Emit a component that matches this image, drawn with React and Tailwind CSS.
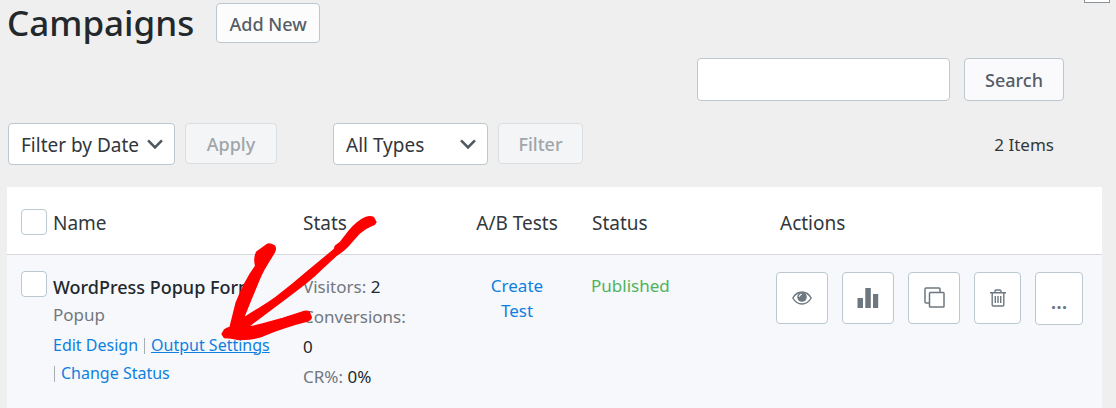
import clsx from "clsx";

const CAMPAIGNS = [
  {
    id: 1,
    name: "WordPress Popup Form",
    type: "Popup",
    visitors: 2,
    conversions: 0,
    rate: "0%",
    status: "Published",
  },
];

const EyeIcon = () => (
  <svg width="20" height="14" viewBox="0 0 20 14" fill="none">
    <path d="M0.8 7C3 3.2 6.2 1 10 1s7 2.200 9.200 6C17 10.800 13.800 13 10 13S3 10.800 0.800 7Z" stroke="currentColor" strokeWidth="1.400" />
    <circle cx="10" cy="6" r="4.800" fill="currentColor" />
    <path d="M7.300 5.800C7.400 4.300 8.300 3.400 9.800 3.200" stroke="#fff" strokeWidth="1.100" />
  </svg>
);

const ChartIcon = () => (
  <svg width="22" height="20" viewBox="0 0 22 20" fill="currentColor">
    <path d="M0.500 10h5.500v10H0.500zM8.300 0h5.500v20H8.300zM16 6h5.200v14H16z" />
  </svg>
);

const CopyIcon = () => (
  <svg width="21" height="21" viewBox="0 0 21 21" fill="none" stroke="currentColor" strokeWidth="1.500">
    <path d="M5 16H2a1 1 0 0 1-1-1V2a1 1 0 0 1 1-1h13a1 1 0 0 1 1 1v3" />
    <rect x="5.500" y="5.500" width="14.500" height="14.500" rx="0.800" />
  </svg>
);

const TrashIcon = () => (
  <svg width="16" height="18" viewBox="0 0 16 18" fill="none" stroke="currentColor" strokeWidth="1.400">
    <path d="M0 3.700h16M5 3.500V2.200Q5 1 6.200 1h3.600Q11 1 11 2.200v1.300M2.200 4v12q0 1 1 1h9.600q1 0 1-1V4M5.300 7v7M8 7v7M10.700 7v7" />
  </svg>
);

const Chevron = () => (
  <svg className="pointer-events-none absolute right-3 top-4" width="16" height="11" viewBox="0 0 15 10" fill="none">
    <path d="M1 1.200l6.500 6.500L14 1.200" stroke="#50575e" strokeWidth="2.400" />
  </svg>
);

const Arrow = () => (
  <svg
    className="pointer-events-none absolute left-[209px] top-[23px]"
    width="170"
    height="136"
    viewBox="0 0 510 408"
    fill="#ff0000"
    stroke="#ff0000"
    strokeWidth="4"
    strokeLinejoin="round"
  >
    <path d="M18 372L25 360Q32 354 42 352L60 280Q85 215 119 168Q113 145 122 126L152 104Q160 98 176 108Q181 117 174 129L156 158L144 178Q130 205 125 220L105 268L82 325Q108 307 130 295Q155 280 180 262L230 222L280 180L355 118L358 108L372 98L400 62Q425 33 448 23Q462 18 472 22L480 36Q478 43 468 46Q445 55 430 70L405 98Q390 118 360 137L320 174Q295 199 270 219L210 265L150 310L95 351Q120 348 140 342L200 325L265 304Q275 302 280 307L286 322Q284 330 274 333L240 342Q210 351 180 362L140 378Q120 385 100 387L70 389L45 384L25 383Z" />
  </svg>
);

const SelectBox = ({ label, value, className }) => (
  <div className={clsx("relative", className)}>
    <select
      aria-label={label}
      className="h-[42px] w-full appearance-none rounded-[4px] border border-[#bcc8d0] bg-white pl-3 pt-[2px] text-[19px] text-[#32373c]"
    >
      <option>{value}</option>
    </select>
    <Chevron />
  </div>
);

const BUTTON = "rounded-[4px] border pt-[2px] font-medium text-[18px]";

const ACTIONS = [
  { label: "Preview", icon: EyeIcon, className: "w-[52px]" },
  { label: "Analytics", icon: ChartIcon, className: "w-[52px]" },
  { label: "Duplicate", icon: CopyIcon, className: "w-[52px]" },
  { label: "Delete", icon: TrashIcon, className: "w-[47px]" },
];

const ActionButton = ({ label, className, children }) => (
  <button
    aria-label={label}
    className={clsx(
      "flex items-center justify-center rounded-[4px] border border-[#bcc8d0] bg-white text-[#6c7781]",
      className
    )}
  >
    {children}
  </button>
);

const CheckBox = ({ label }) => (
  <input
    type="checkbox"
    aria-label={label}
    className="block size-[26px] appearance-none rounded-[4px] border border-[#bcc8d0] bg-white"
  />
);

const Divider = () => <span className="mx-[6px] inline-block h-4 w-px bg-[#a8adb2] align-[-3px]" />;

const CampaignRow = ({ campaign }) => (
  <tr className="border-t border-[#d5d9dc] bg-[#f6f8fc] align-top">
    <td className="pl-[14px] pt-4">
      <CheckBox label={campaign.name} />
    </td>
    <td className="pb-6 pt-[18px] text-[16px] leading-[28px]">
      <div className="whitespace-nowrap text-[18px] font-medium text-[#23282d]">{campaign.name}</div>
      <div className="text-[17px] text-[#72777c]">{campaign.type}</div>
      <div className="mt-[2px]">
        <a href="#edit" className="text-[#0f7fe0]">Edit Design</a>
        <Divider />
        <a href="#output" className="text-[#0f7fe0] underline">Output Settings</a>
        <br />
        <span className="-ml-[5px]">
          <Divider />
        </span>
        <a href="#status" className="text-[#0f7fe0]">Change Status</a>
      </div>
    </td>
    <td className="pt-[17px] text-[17px] leading-[30px] text-[#72777c]">
      <div>
        Visitors: <span className="text-[#23282d]">{campaign.visitors}</span>
      </div>
      <div>
        Conversions:
        <br />
        <span className="text-[#23282d]">{campaign.conversions}</span>
      </div>
      <div>
        CR%: <span className="text-[#23282d]">{campaign.rate}</span>
      </div>
    </td>
    <td className="pt-[18px] text-center text-[17px] leading-[25px]">
      <a href="#test" className="text-[#0f7fe0]">
        Create
        <br />
        Test
      </a>
    </td>
    <td className="pl-[18px] pt-[18px] text-[17px] leading-[25px] text-[#4fb35a]">{campaign.status}</td>
    <td className="pt-[17px]">
      <div className="flex items-start gap-[14px]">
        {ACTIONS.map(({ label, icon: Icon, className }) => (
          <ActionButton key={label} label={label} className={clsx("h-[52px]", className)}>
            <Icon />
          </ActionButton>
        ))}
        <ActionButton label="More" className="h-[53px] w-12 pt-2 text-[20px] font-semibold">
          ...
        </ActionButton>
      </div>
    </td>
  </tr>
);

const App = () => {
  return (
    <main className="relative min-h-screen bg-[#efefef] pl-[7px] pr-[14px] pt-[3px] font-['Noto_Sans',sans-serif] text-[#32373c]">
      <div className="absolute right-[6px] top-0 h-[3px] w-[26px] border border-t-0 border-[#8a9299] bg-white" />

      <header className="flex h-10 items-center gap-[22px]">
        <h1 className="text-[35px] font-medium leading-10 text-[#23282d]">Campaigns</h1>
        <button className={clsx(BUTTON, "h-10 w-[104px] border-[#bcc8d0] bg-[#fcfcfd] text-[#555d66]")}>
          Add New
        </button>
      </header>

      <form className="mt-[15px] flex justify-end gap-[14px] pr-[38px]">
        <input
          type="search"
          aria-label="Search campaigns"
          className="h-[43px] w-[253px] rounded-[4px] border border-[#bcc8d0] bg-white px-3 text-[18px]"
        />
        <button type="button" className={clsx(BUTTON, "h-[43px] w-[100px] border-[#bcc8d0] bg-[#fafafc] text-[#555d66]")}>
          Search
        </button>
      </form>

      <div className="mt-[22px] flex items-start">
        <SelectBox label="Filter by date" value="Filter by Date" className="ml-px w-[167px]" />
        <button disabled className={clsx(BUTTON, "ml-[10px] h-[41px] w-[92px] border-[#dcdfe2] bg-[#f4f5f7] text-[#a0a5aa]")}>
          Apply
        </button>
        <SelectBox label="Filter by type" value="All Types" className="ml-14 w-[155px]" />
        <button disabled className={clsx(BUTTON, "ml-[10px] h-[41px] w-[85px] border-[#dcdfe2] bg-[#f4f5f7] text-[#a0a5aa]")}>
          Filter
        </button>
        <span className="ml-auto pr-12 pt-[2px] text-[17px] leading-10">2 Items</span>
      </div>

      <div className="relative mt-[22px]">
        <table className="w-full table-fixed border-collapse bg-white">
          <colgroup>
            <col className="w-[46px]" />
            <col className="w-[250px]" />
            <col className="w-[158px]" />
            <col className="w-[112px]" />
            <col className="w-[203px]" />
            <col />
          </colgroup>
          <thead>
            <tr className="h-[67px] text-left text-[19px]">
              <th className="pl-[14px] pt-1">
                <CheckBox label="Select all" />
              </th>
              <th className="pt-[5px] font-normal">Name</th>
              <th className="pt-[5px] font-normal">Stats</th>
              <th className="pt-[5px] text-center font-normal">A/B Tests</th>
              <th className="pl-[19px] pt-[5px] font-normal">Status</th>
              <th className="pl-1 pt-[5px] font-normal">Actions</th>
            </tr>
          </thead>
          <tbody>
            {CAMPAIGNS.map((campaign) => (
              <CampaignRow key={campaign.id} campaign={campaign} />
            ))}
          </tbody>
        </table>
        <Arrow />
      </div>
    </main>
  );
};

export default App;
